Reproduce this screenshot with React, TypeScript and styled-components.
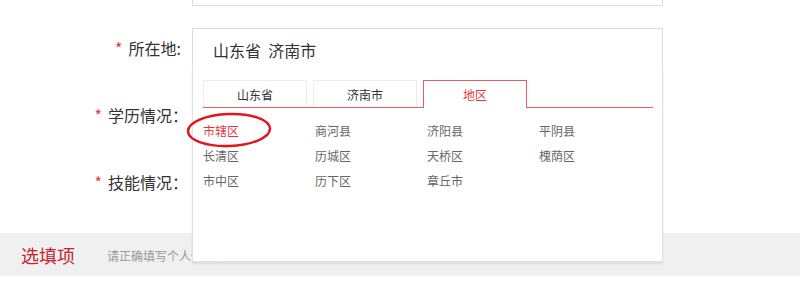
import React, { useState } from 'react';
import styled, { createGlobalStyle } from 'styled-components';

const GlobalStyle = createGlobalStyle`
  html, body {
    margin: 0;
    padding: 0;
    background: #fff;
    overflow: hidden;
  }
  body {
    font-family: "Noto Sans CJK SC", "Noto Sans", sans-serif;
    color: #333;
  }
`;

const Page = styled.div`
  width: 800px;
  height: 302px;
  overflow: hidden;
  position: relative;
`;

const Form = styled.div`
  display: flex;
  flex-direction: column;
  margin-top: -34px;
`;

const Row = styled.div<{ $gap: number; $raised?: boolean }>`
  position: relative;
  z-index: ${(p) => (p.$raised ? 10 : 1)};
  display: flex;
  align-items: center;
  height: 40px;
  margin-bottom: ${(p) => p.$gap}px;
`;

const Label = styled.div<{ $pad: number }>`
  width: 192px;
  box-sizing: border-box;
  padding-right: ${(p) => p.$pad}px;
  text-align: right;
  font-size: 16px;
  color: #333;
  white-space: nowrap;
`;

const Star = styled.span`
  color: #e4393c;
  margin-right: 6px;
`;

const Field = styled.div`
  position: relative;
  width: 471px;
  height: 40px;
  box-sizing: border-box;
  border: 1px solid #dcdcdc;
  display: flex;
  align-items: center;
  padding: 3px 0 0 20px;
  font-size: 16px;
  color: #333;
`;

const Panel = styled.div`
  position: absolute;
  z-index: 5;
  top: 100%;
  left: -1px;
  width: 471px;
  height: 195px;
  box-sizing: border-box;
  background: #fff;
  border: 1px solid #e2e2e2;
  border-top: none;
  box-shadow: 0 2px 2px rgba(0, 0, 0, 0.08);
  padding: 13px 9px 0 10px;
`;

const Tabs = styled.div`
  display: flex;
  gap: 6px;
  height: 27px;
  border-bottom: 1px solid #ee5a5d;
`;

const Tab = styled.div<{ $active?: boolean }>`
  width: 104px;
  height: ${(p) => (p.$active ? 28 : 27)}px;
  box-sizing: border-box;
  border: 1px solid ${(p) => (p.$active ? '#ee5a5d' : '#ededed')};
  border-bottom: none;
  background: #fff;
  display: flex;
  align-items: center;
  justify-content: center;
  font-size: 12px;
  color: ${(p) => (p.$active ? '#e4393c' : '#333')};
  cursor: pointer;
`;

const Areas = styled.div`
  display: grid;
  grid-template-columns: repeat(4, 112px);
  grid-auto-rows: 25px;
  padding-top: 10px;
`;

const Area = styled.div<{ $active?: boolean }>`
  font-size: 12px;
  line-height: 25px;
  color: ${(p) => (p.$active ? '#e4393c' : '#666')};
  cursor: pointer;
`;

const Circle = styled.svg`
  position: absolute;
  left: -9px;
  top: 44px;
  pointer-events: none;
`;

const Band = styled.div`
  position: relative;
  z-index: 0;
  display: flex;
  align-items: center;
  height: 43px;
  margin-top: -9px;
  background: #f0f0f0;
  padding-left: 21px;
`;

const BandTitle = styled.span`
  font-size: 18px;
  color: #c4242b;
`;

const BandHint = styled.span`
  font-size: 12px;
  color: #999;
  margin-left: 32px;
  padding-top: 1px;
`;

const tabs = ['山东省', '济南市', '地区'];
const areas = [
  '市辖区', '商河县', '济阳县', '平阴县',
  '长清区', '历城区', '天桥区', '槐荫区',
  '市中区', '历下区', '章丘市',
];

const App: React.FC = () => {
  const [tab, setTab] = useState<number>(2);
  const [area, setArea] = useState<string>('市辖区');

  return (
    <Page>
      <GlobalStyle />
      <Form>
        <Row $gap={22}>
          <Label $pad={11} />
          <Field />
        </Row>
        <Row $gap={27} $raised>
          <Label $pad={11}>
            <Star>*</Star>所在地:
          </Label>
          <Field>
            山东省&nbsp;&nbsp;济南市
            <Panel>
              <Tabs>
                {tabs.map((t, i) => (
                  <Tab key={t} $active={i === tab} onClick={() => setTab(i)}>
                    {t}
                  </Tab>
                ))}
              </Tabs>
              <Areas>
                {areas.map((a) => (
                  <Area key={a} $active={a === area} onClick={() => setArea(a)}>
                    {a}
                  </Area>
                ))}
              </Areas>
              {/* hand drawn highlight round the picked item */}
              <Circle width="90" height="40" viewBox="0 0 90 40">
                <ellipse
                  cx="45"
                  cy="19"
                  rx="41"
                  ry="16"
                  fill="none"
                  stroke="#e3141b"
                  strokeWidth="2.5"
                  transform="rotate(-2 45 19)"
                />
              </Circle>
            </Panel>
          </Field>
        </Row>
        <Row $gap={27}>
          <Label $pad={4}>
            <Star>*</Star>学历情况：
          </Label>
        </Row>
        <Row $gap={40}>
          <Label $pad={4}>
            <Star>*</Star>技能情况：
          </Label>
        </Row>
        <Band>
          <BandTitle>选填项</BandTitle>
          <BandHint>请正确填写个人信息，以便我们为您提供更好的服务</BandHint>
        </Band>
      </Form>
    </Page>
  );
};

export default App;
